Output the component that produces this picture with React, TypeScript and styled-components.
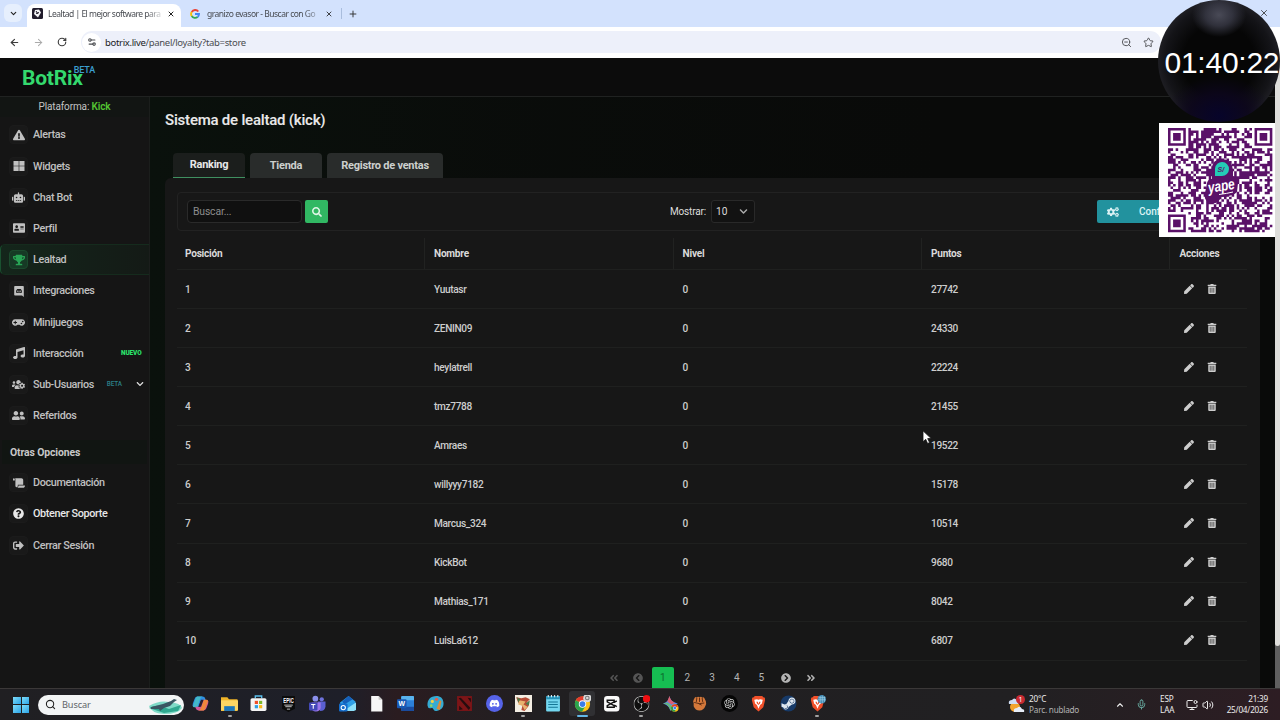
import React from 'react';
import styled, { createGlobalStyle, css } from 'styled-components';
import {
  FaExclamationTriangle, FaRobot, FaAddressCard, FaTrophy, FaGamepad, FaMusic, FaUsersCog,
  FaUserFriends, FaScroll, FaQuestionCircle, FaSignOutAlt, FaCogs, FaSearch, FaTrashAlt, FaPen,
  FaChevronCircleLeft, FaChevronCircleRight, FaAngleDoubleLeft, FaAngleDoubleRight, FaDiscord,
  FaChevronDown, FaSteamSymbol,
} from 'react-icons/fa';
import { SiOpenai, SiObsstudio } from 'react-icons/si';
import { ArrowLeft, ArrowRight, RotateCw, X, Plus, ChevronDown, ChevronUp, Star, ZoomOut, Search, Mic, Volume2, MonitorDot, Settings2 } from 'lucide-react';

const Global = createGlobalStyle`
  * { box-sizing: border-box; }
  body { margin: 0; background: #000; overflow: hidden; }
`;

const ui = '"Noto Sans", "Open Sans", sans-serif';

const Screen = styled.div`
  position: relative;
  width: 1280px;
  height: 720px;
  display: flex;
  flex-direction: column;
  overflow: hidden;
  font-family: Roboto, "Liberation Sans", sans-serif;
  color: #dcdcdc;
`;

/* ---------- browser ---------- */
const TabStrip = styled.div`
  height: 27px;
  flex: none;
  display: flex;
  align-items: stretch;
  background: #d3e2fd;
  padding-left: 4px;
  font: 8.5px ${ui};
  color: #474a50;
`;
const TabMenu = styled.div`
  width: 18px;
  height: 18px;
  margin: 4px 5px 0 0;
  border-radius: 6px;
  background: #e6effd;
  display: grid;
  place-items: center;
  color: #222;
`;
const BrowserTab = styled.div<{ $active?: boolean; $w: number }>`
  display: flex;
  align-items: center;
  width: ${p => p.$w}px;
  margin-top: ${p => (p.$active ? 4 : 0)}px;
  padding: ${p => (p.$active ? '0 6px 4px 5px' : '0 5px 0 9px')};
  border-radius: 8px 8px 0 0;
  background: ${p => (p.$active ? '#fff' : 'transparent')};
  svg { flex: none; color: #222; }
`;
const TabTitle = styled.span<{ $indent: number }>`
  flex: 1;
  margin: 0 4px 0 ${p => p.$indent}px;
  white-space: nowrap;
  overflow: hidden;
  letter-spacing: -0.5px;
  mask-image: linear-gradient(90deg, #000 85%, transparent 102%);
`;
const TabTail = styled.div`
  display: flex;
  align-items: center;
  gap: 6px;
  margin-left: 3px;
  color: #333;
  &::before { content: ''; width: 1px; height: 11px; background: #a9bddd; }
`;
const Toolbar = styled.div`
  height: 31px;
  flex: none;
  display: flex;
  align-items: center;
  background: #fff;
  padding: 0 0 1px 9px;
  color: #3c3c3c;
`;
const NavIcons = styled.div`
  display: flex;
  align-items: center;
  gap: 13px;
  width: 72px;
`;
const Omnibox = styled.div`
  display: flex;
  align-items: center;
  flex: none;
  width: 1080px;
  height: 22px;
  border-radius: 11px;
  background: #edf0fa;
  padding: 0 7px 0 1px;
  font: 9.5px ${ui};
  color: #4a4c50;
`;
const SiteInfo = styled.span`
  display: grid;
  place-items: center;
  width: 19px;
  height: 19px;
  border-radius: 50%;
  background: #fff;
  margin-right: 4px;
`;
const Url = styled.span`
  flex: 1;
  letter-spacing: -0.32px;
  b { font-weight: 400; color: #202124; }
`;
const OmniActions = styled.span`
  display: flex;
  gap: 11px;
`;

/* ---------- page ---------- */
const Page = styled.div`
  height: 630px;
  flex: none;
  display: flex;
  background: #0a0a0a;
`;
const Site = styled.div`
  width: 1275px;
  display: flex;
  flex-direction: column;
`;
const Scrollbar = styled.div`
  width: 5px;
  background: #5f5f5f;
  &::before { content: ''; display: block; height: 588px; background: #dededb; border-radius: 0 0 3px 3px; }
`;
const SiteHeader = styled.header`
  height: 39px;
  flex: none;
  border-bottom: 1px solid #202221;
  background: #0c0c0c;
  padding: 7px 0 0 22px;
  display: flex;
  align-items: flex-start;
`;
const Logo = styled.span`
  font-size: 21px;
  line-height: 26px;
  font-weight: 700;
  letter-spacing: -0.2px;
  color: #34d96e;
`;
const LogoBeta = styled.sup`
  margin: 0 0 0 -9px;
  font-size: 9px;
  line-height: 10px;
  font-weight: 500;
  letter-spacing: -0.2px;
  color: #3c9fd0;
`;
const Body = styled.div`
  flex: 1;
  display: flex;
  min-height: 0;
`;
const Sidebar = styled.nav`
  width: 150px;
  flex: none;
  background: #151515;
  border-right: 1px solid #1b1e1c;
`;
const Platform = styled.div`
  height: 20px;
  margin-bottom: 2.3px;
  background: #121513;
  text-align: center;
  font-size: 10px;
  line-height: 20px;
  letter-spacing: -0.13px;
  color: #c4c4c4;
  b { color: #53c332; font-weight: 600; }
`;
const NavItem = styled.a<{ $active?: boolean; $bright?: boolean }>`
  display: flex;
  align-items: center;
  height: 31.2px;
  padding: 0 5px 0 8px;
  font-size: 10.8px;
  font-weight: 500;
  letter-spacing: -0.33px;
  color: ${p => (p.$bright ? '#e8e8e8' : '#c0c0c0')};
  border-left: 1px solid transparent;
  ${p => p.$active && css`
    background: linear-gradient(90deg, #14261b, #141a16);
    border: 1px solid #152b1d;
    border-left-color: #1a5130;
    border-right: 0;
    border-radius: 5px 0 0 5px;
  `}
`;
const NavIcon = styled.span<{ $active?: boolean }>`
  width: 19px;
  height: 19px;
  margin-right: 5px;
  border-radius: 4px;
  display: grid;
  place-items: center;
  font-size: 12px;
  background: ${p => (p.$active ? '#163a25' : '#191919')};
  border: 1px solid ${p => (p.$active ? '#1b4a2d' : '#1b1b1b')};
  color: ${p => (p.$active ? '#28a455' : 'inherit')};
`;
const Badge = styled.span<{ $c: string; $mr: number; $bold?: boolean }>`
  margin-left: auto;
  margin-right: ${p => p.$mr}px;
  font-size: 6.4px;
  letter-spacing: -0.1px;
  font-weight: ${p => (p.$bold ? 900 : 500)};
  color: ${p => p.$c};
`;
const NavHeading = styled.div`
  height: 24px;
  margin: 9px 2px 3px;
  padding-left: 8px;
  background: #111512;
  font-size: 10.4px;
  font-weight: 700;
  letter-spacing: -0.1px;
  line-height: 25px;
  color: #c8c8c8;
`;
const Main = styled.main`
  flex: 1;
  display: flex;
  flex-direction: column;
  padding: 13px 15px 0;
  background:
    linear-gradient(90deg, #0a110c 0, rgba(10, 14, 11, 0.6) 30%, rgba(9, 9, 9, 0) 70%),
    #090a09;
`;
const Title = styled.h1`
  margin: 0;
  font-size: 15px;
  line-height: 21px;
  font-weight: 600;
  letter-spacing: -0.23px;
  color: #e6e6e6;
`;
const Tabs = styled.div`
  display: flex;
  gap: 5px;
  margin: 22px 0 0 8px;
`;
const Tab = styled.div<{ $active?: boolean; $w: number }>`
  width: ${p => p.$w}px;
  height: 25px;
  border-radius: 4px 4px 0 0;
  text-align: center;
  font-size: 11px;
  font-weight: 700;
  letter-spacing: -0.25px;
  line-height: ${p => (p.$active ? 23 : 25)}px;
  color: ${p => (p.$active ? '#e8e8e8' : '#cccfcd')};
  background: ${p => (p.$active ? '#1b1e1c' : '#292c2b')};
  border-bottom: ${p => (p.$active ? '1px solid #3f9060' : '0')};
`;
const Panel = styled.section`
  flex: 1;
  background: #171717;
  border-radius: 6px 6px 0 0;
  padding: 14px 13px 0 12px;
  display: flex;
  flex-direction: column;
`;
const Filters = styled.div`
  height: 39px;
  flex: none;
  border: 1px solid #222;
  border-radius: 4px;
  display: flex;
  align-items: center;
  justify-content: space-between;
  padding: 0 9px;
  font-size: 10px;
  letter-spacing: -0.15px;
`;
const Group = styled.div`
  display: flex;
  align-items: center;
`;
const SearchField = styled.div`
  width: 115px;
  height: 23px;
  border: 1px solid #2a2a2a;
  border-radius: 4px;
  background: #101010;
  padding-left: 5px;
  margin-right: 3px;
  font-size: 10.4px;
  line-height: 21px;
  color: #8d8d8d;
`;
const SearchButton = styled.button`
  width: 23px;
  height: 23px;
  border: 0;
  border-radius: 2px;
  padding: 0;
  background: #31b863;
  color: #dff5e6;
  font-size: 10px;
  display: grid;
  place-items: center;
`;
const Select = styled.div`
  width: 44px;
  height: 23px;
  margin-left: 5px;
  padding: 0 6px 0 4px;
  border: 1px solid #292929;
  border-radius: 3px;
  background: #121212;
  display: flex;
  align-items: center;
  justify-content: space-between;
  font-size: 10.2px;
`;
const Configure = styled.button`
  width: 140px;
  height: 23px;
  border: 0;
  border-radius: 2px;
  background: #22929e;
  color: #dcf2f4;
  font: 500 10px Roboto, sans-serif;
  display: flex;
  align-items: center;
  padding: 0 10px;
  svg { font-size: 12px; margin-right: 20px; }
`;
const Row = styled.div<{ $head?: boolean }>`
  display: grid;
  grid-template-columns: 247px 248.6px 248.4px 248.4px 77px;
  height: ${p => (p.$head ? 32 : 39.08)}px;
  flex: none;
  margin-top: ${p => (p.$head ? 7 : 0)}px;
  border-bottom: 1px solid #1f201f;
  font-size: 10.1px;
  font-weight: ${p => (p.$head ? 700 : 500)};
  letter-spacing: ${p => (p.$head ? -0.24 : -0.33)}px;
  color: ${p => (p.$head ? '#dadada' : '#cdcdcd')};
`;
const Cell = styled.div<{ $head?: boolean }>`
  display: flex;
  align-items: center;
  padding-left: 9px;
  border-left: 1px solid ${p => (p.$head ? '#212221' : 'transparent')};
  &:first-child { border-color: transparent; padding-left: 7px; }
`;
const Actions = styled.div`
  display: flex;
  align-items: center;
  gap: 13px;
  padding: 0 0 1px 14.5px;
  font-size: 10px;
`;
const Pager = styled.div`
  display: flex;
  align-items: flex-start;
  padding: 6px 0 0 425.5px;
  height: 28px;
  overflow: hidden;
  font-size: 10px;
  color: #b4b4b4;
`;
const PageButton = styled.span<{ $active?: boolean; $dim?: boolean }>`
  width: 22px;
  height: 22px;
  margin-right: 2.65px;
  border-radius: 2px 2px 0 0;
  display: grid;
  place-items: center;
  flex: none;
  background: ${p => (p.$active ? '#16be52' : 'transparent')};
  color: ${p => (p.$active ? '#0c6b2d' : p.$dim ? '#555' : 'inherit')};
`;

/* ---------- taskbar ---------- */
const Taskbar = styled.footer`
  height: 32px;
  flex: none;
  display: flex;
  align-items: center;
  background: linear-gradient(90deg, #201f22 0, #1e1f29 27%, #2a1c20 31%, #211f21 42%, #212022 80%, #2d1d23 100%);
  border-top: 1px solid #3b3838;
  padding-left: 13px;
  font: 9px ${ui};
  color: #ececec;
`;
const StartGrid = styled.div`
  width: 16px;
  height: 16px;
  display: grid;
  grid-template-columns: 1fr 1fr;
  gap: 1px;
  i { background: linear-gradient(135deg, #7fdcf8, #2ba4e8); }
`;
const SearchPill = styled.div`
  width: 146px;
  height: 20px;
  margin: 0 1.5px 0 9px;
  padding-left: 7px;
  border-radius: 10px;
  background: #f2f4f5;
  color: #606468;
  display: flex;
  align-items: center;
  gap: 6px;
  overflow: hidden;
  font-size: 9.2px;
  letter-spacing: -0.1px;
  svg:last-child { margin-left: auto; }
`;
const AppSlot = styled.div<{ $run?: 'idle' | 'active' }>`
  width: 29.4px;
  height: 31px;
  display: flex;
  flex-direction: column;
  align-items: center;
  padding-top: 6px;
  &::after {
    content: '';
    margin-top: 3px;
    width: ${p => (p.$run === 'active' ? 11 : 4)}px;
    height: 2px;
    border-radius: 1px;
    background: ${p => (p.$run === 'active' ? '#63b8e8' : p.$run ? '#a2a2a2' : 'transparent')};
  }
`;
const Highlight = styled.div`
  width: 26px;
  margin: -4px 0 -4px;
  padding: 4px 0 4px 5px;
  height: 25px;
  border-radius: 3px;
  background: #303033;
`;
const Weather = styled.div`
  display: flex;
  align-items: center;
  gap: 4px;
  margin-left: 176px;
  width: 107px;
`;
const TwoLine = styled.div<{ $right?: boolean; $w?: number }>`
  display: flex;
  flex-direction: column;
  width: ${p => (p.$w ? p.$w + 'px' : 'auto')};
  margin-left: ${p => (p.$right ? 'auto' : '0')};
  text-align: ${p => (p.$right ? 'right' : 'left')};
  font-size: 8.2px;
  line-height: 10.5px;
  letter-spacing: -0.22px;
  white-space: nowrap;
`;
const Dim = styled.span`color: #b3b3b3;`;
const Tray = styled.div`
  display: flex;
  align-items: center;
  flex: 1;
  padding-right: 12px;
`;
const TrayItem = styled.div<{ $w: number }>`
  width: ${p => p.$w}px;
  flex: none;
  display: flex;
  svg { flex: none; }
`;

/* ---------- stream overlays ---------- */
const Ball = styled.div`
  position: absolute;
  left: 1157.5px;
  top: 0;
  width: 122px;
  height: 122px;
  border-radius: 50%;
  background:
    radial-gradient(ellipse 27px 22px at 61px 15px, rgba(76, 77, 90, 0.95) 0, rgba(58, 59, 72, 0.8) 50%, rgba(20, 20, 26, 0) 100%),
    radial-gradient(ellipse 54px 40px at 61px 116px, #07042a 0, rgba(12, 6, 28, 0.9) 55%, transparent 100%),
    radial-gradient(circle at 61px 61px, #060606 0 36px, #141418 54px, #1e1e23 61px);
`;
const Timer = styled.div`
  position: absolute;
  left: 1164.5px;
  top: 46px;
  font: 30px/34px "Liberation Sans", Arial, sans-serif;
  letter-spacing: -0.25px;
  color: #fff;
  white-space: nowrap;
`;
const QrCard = styled.div`
  position: absolute;
  left: 1159px;
  top: 123px;
  width: 121px;
  height: 114px;
  padding: 5px 0 0 9px;
  background: linear-gradient(90deg, #fff 116px, #dededb 116px);
`;
const Pointer = styled.svg`
  position: absolute;
  left: 922px;
  top: 430px;
`;
const WindowClose = styled.div`
  position: absolute;
  left: 1259px;
  top: 8px;
  display: flex;
  color: #333;
`;

const QR_SIZE = 41;
function qrPath() {
  let seed = 90217;
  const rand = () => ((seed = (seed * 1103515245 + 12345) & 0x7fffffff) >> 12) / (0x7fffffff >> 12);
  const finder = (x: number, y: number) => {
    const ring = Math.max(Math.abs(x - 3), Math.abs(y - 3));
    return ring === 3 || ring <= 1;
  };
  let d = '';
  for (let y = 0; y < QR_SIZE; y++) {
    for (let x = 0; x < QR_SIZE; x++) {
      let on = rand() < 0.52;
      const fx = x > QR_SIZE / 2 ? QR_SIZE - 1 - x : x;
      const fy = y > QR_SIZE / 2 ? QR_SIZE - 1 - y : y;
      const corner = !(x > 20 && y > 20);
      if (corner && fx < 8 && fy < 8) on = fx < 7 && fy < 7 && finder(fx, fy);
      if (on) d += `M${x} ${y}h1v1h-1z`;
    }
  }
  return d;
}
const QR_PATH = qrPath();

function Qr() {
  return (
    <svg width="105" height="105" viewBox="0 0 105 105">
      <path d={QR_PATH} transform="scale(2.545)" fill="#5a1168" />
      <path d="M39 55q1-4 5-4V41q0-10 10-10t11 11v6q6 0 5 7l-1 9q-3 4-16 5-3 8-11 6-7-3-5-10z" fill="#5a1168" />
      <path d="M47 48V40.500a7 7 0 1 1 7 7.500z" fill="#24cbb6" />
      <text x="49.500" y="43.500" fontFamily="Liberation Sans" fontStyle="italic" fontWeight="700" fontSize="7" fill="#5a1168">S/</text>
      <text x="40" y="63" transform="rotate(-9 53 60)" fontFamily="Liberation Sans" fontStyle="italic" fontWeight="700" fontSize="15" textLength="27" lengthAdjust="spacingAndGlyphs" fill="#fff">yape</text>
      <path d="M51 66.500q8-1 14-2.500" stroke="#fff" strokeWidth="1" fill="none" />
    </svg>
  );
}

const WidgetsIcon = () => (
  <svg width="12" height="12" viewBox="0 0 12 12" fill="currentColor">
    <path d="M.5 1h5.200v4.700H.5zM6.300 1h5.200v4.700H6.300zM.5 6.300h5.200V11H.5zM6.300 6.300h5.200V11H6.300z" />
  </svg>
);
const IntegrationsIcon = () => (
  <svg width="12" height="12" viewBox="0 0 12 12">
    <path d="M2 1h8a.8.8 0 0 1 .8.8V12L9 10.500H2a.8.8 0 0 1-.8-.8V1.800A.8.8 0 0 1 2 1z" fill="currentColor" />
    <path d="M3 7.500Q3 4.500 4.300 4h3.400Q9 4.500 9 7.500q-1 .8-1.600.2H4.600Q4 8.300 3 7.500z" fill="#1a1a1a" />
    <circle cx="4.900" cy="6.200" r=".7" fill="currentColor" /><circle cx="7.100" cy="6.200" r=".7" fill="currentColor" />
  </svg>
);

const nav = [
  { icon: <FaExclamationTriangle />, label: 'Alertas' },
  { icon: <WidgetsIcon />, label: 'Widgets' },
  { icon: <FaRobot size={13} />, label: 'Chat Bot' },
  { icon: <FaAddressCard />, label: 'Perfil' },
  { icon: <FaTrophy />, label: 'Lealtad', active: true },
  { icon: <IntegrationsIcon />, label: 'Integraciones' },
  { icon: <FaGamepad size={13} />, label: 'Minijuegos' },
  { icon: <FaMusic />, label: 'Interacción', extra: <Badge $c="#2be36b" $mr={2.5} $bold>NUEVO</Badge> },
  { icon: <FaUsersCog size={13} />, label: 'Sub-Usuarios', extra: <><Badge $c="#2c8088" $mr={14}>BETA</Badge><FaChevronDown size={8} color="#ddd" /></> },
  { icon: <FaUserFriends size={13} />, label: 'Referidos' },
];
const otherNav = [
  { icon: <FaScroll />, label: 'Documentación' },
  { icon: <FaQuestionCircle size={11} />, label: 'Obtener Soporte', bright: true },
  { icon: <FaSignOutAlt size={11} />, label: 'Cerrar Sesión' },
];
const ranking: [string, string][] = [
  ['Yuutasr', '27742'], ['ZENIN09', '24330'], ['heylatrell', '22224'], ['tmz7788', '21455'], ['Amraes', '19522'],
  ['willyyy7182', '15178'], ['Marcus_324', '10514'], ['KickBot', '9680'], ['Mathias_171', '8042'], ['LuisLa612', '6807'],
];

/* Taskbar artwork shares a 16-unit box. */
const Art = ({ children }: { children: React.ReactNode }) => (
  <svg width="17" height="17" viewBox="0 0 16 16">{children}</svg>
);
const Chrome = () => (
  <>
    <circle cx="8" cy="8.500" r="7.200" fill="#fbc116" />
    <path d="M8 8.500 1.700 5A7.200 7.200 0 0 1 14.400 5z" fill="#e33b2e" />
    <path d="M8 8.500 1.700 5A7.200 7.200 0 0 0 7.500 15.700l3.200-5.200z" fill="#2ba24c" />
    <circle cx="8" cy="8.500" r="3.500" fill="#fff" /><circle cx="8" cy="8.500" r="2.700" fill="#3a7de8" />
  </>
);
const BraveShape = () => (
  <>
    <path d="M4.500 1h7l1 1.200 1.500.3.200 2.500-1.700 6.500L8 15.500 3.500 11.500 1.800 5 2 2.500l1.500-.3z" fill="#f0502a" />
    <path d="M4 4.500 6.500 4 8 4.500 9.500 4l2.500.5-.8 3.500-1.700 1.500L8 13 6.500 9.500 4.800 8z" fill="#fff" />
    <path d="M6 6.300h1.300L8 8.500l.7-2.200H10L9.400 8 8 9.500 6.600 8z" fill="#f0502a" />
  </>
);

const apps: { art: React.ReactNode; run?: 'idle' | 'active' }[] = [
  { art: <><path d="M5 1.500h5q2 0 2.500 2L13 5H8.500L6 11.500 1.500 11Q0 10.500.8 8L2.500 3.500Q3.200 1.500 5 1.500z" fill="#2d8fe4" /><path d="M5 1.500q-1.500.5-2 3L1 10q-.3 1.500 1 1.500h3L7.500 4Q8 2 10 1.500z" fill="#43b8c8" /><path d="M11 14.500H6q-2 0-2.500-2L3 11h4.500L10 4.500l4.500.5q1.500.5.7 3L13.500 12.500q-.7 2-2.500 2z" fill="#d4569a" /><path d="M11 14.500q1.500-.5 2-3L15 6q.3-1.500-1-1.500h-3L8.500 12Q8 14 6 14.500z" fill="#f0873c" /><path d="m6 11 2.500-6.500H11L8.500 11z" fill="#2a2030" /></> },
  { art: <><path d="M0 2h6l1.500 2H15.500v11H0z" fill="#f0b429" /><path d="M0 5h16v9.500H0z" fill="#fdd663" /><path d="M3 15v-4.500h10V15z" fill="#1c77bb" /></>, run: 'idle' },
  { art: <><path d="M5 3V1h6v2" fill="none" stroke="#5bc0ee" strokeWidth="1.300" /><rect x=".5" y="3" width="15" height="12" rx="1.500" fill="#f4f4f4" /><path d="M4.500 5.500h3v3h-3z" fill="#f04f28" /><path d="M8.500 5.500h3v3h-3z" fill="#7db92c" /><path d="M4.500 9.500h3v3h-3z" fill="#2c9fe5" /><path d="M8.500 9.500h3v3h-3z" fill="#fbb91a" /></> },
  { art: <><path d="M2 1h12v12l-6 3-6-3z" fill="#0b0b0b" /><text x="8" y="7.800" textAnchor="middle" fontFamily="Liberation Sans" fontWeight="700" fontSize="7" textLength="10" lengthAdjust="spacingAndGlyphs" fill="#fff">EPIC</text><path d="M4 9.500h8M5 11h6M6.500 13.300h3" stroke="#ddd" strokeWidth=".8" /></> },
  { art: <><circle cx="6" cy="3.500" r="2.700" fill="#8a90ec" /><circle cx="12" cy="4" r="2" fill="#6e72dc" /><path d="M8 6h7.500v5q-.5 4-5 4z" fill="#5a5fd0" /><path d="M2.500 7H11v5q-.5 3.500-4.500 3.500-4 0-4-3.500z" fill="#9b76ea" /><rect y="7" width="8" height="7.500" rx="1" fill="#4349b8" /><path d="M2 9h4M4 9v4" stroke="#fff" strokeWidth="1" /></> },
  { art: <><path d="m1 7 8-6 6.500 5v8H2z" fill="#2f9fe6" /><path d="m3 6 6-5 4 3-8 5z" fill="#155fb9" /><path d="M4 15h10l2-1V7z" fill="#8ce0fa" /><rect y="8" width="8" height="7.500" rx="1" fill="#136ccb" /><circle cx="4" cy="11.800" r="2" fill="none" stroke="#fff" /></> },
  { art: <><path d="M3 1h7l3.500 3.500V15.500H3z" fill="#f7f7f7" /><path d="M10 1v3.500h3.500z" fill="#c8c8c8" /></> },
  { art: <><rect x="4" y="1" width="12" height="14" rx="1" fill="#2c7fd8" /><path d="M4 2q0-1 1-1h10q1 0 1 1v3H4z" fill="#59b4ef" /><path d="M4 11h12v3q0 1-1 1H5q-1 0-1-1z" fill="#1a4b9e" /><rect y="4" width="9" height="8.500" rx="1" fill="#1858b4" /><text x="4.500" y="10.600" textAnchor="middle" fontFamily="Liberation Sans" fontWeight="700" fontSize="6.500" fill="#fff">W</text></> },
  { art: <><path d="M9 1C3 1 0 5 .5 10q.5 3 3 2.500 2-.6 2.500 1 .7 2 3 1.500C14 14 16 11 15.500 7 15 3 12.500 1 9 1z" fill="#35abd3" /><circle cx="5" cy="6" r="1.500" fill="#f3cf45" /><circle cx="9" cy="4" r="1.500" fill="#e65e49" /><circle cx="4" cy="10" r="1.200" fill="#8fd660" /><path d="m9 13 2.500-7q1-1.800 2 0L12 14z" fill="#d88b3d" /></> },
  { art: <><path d="M1 1h14v14H1z" fill="#7c1517" /><path d="m2.500 3 2-.5 9 9.500-1.500 2zM3 10l3.500 3.500L3 14zM11 2.500l3 .5v4z" fill="#260d0f" /></> },
  { art: <><circle cx="8" cy="8" r="8" fill="#5663e8" /><g transform="translate(3 3)"><FaDiscord size={10} color="#fff" /></g></> },
  { art: <><path d="M0 0h16v16H0z" fill="#f4eee3" /><path d="m1 2 5 1 4-1 4 2-3 3 2 3-4 5-3-1 1-4-4-3z" fill="#b64b35" /><path d="m4 5 6 1-2 3 4 2-3 3-2-4-4-1z" fill="#e7b36f" /><path d="m2 2 3 2-2 3zM10 8l4-3-1 5z" fill="#4c7b49" /></>, run: 'idle' },
  { art: <><rect x="2" y="1" width="13" height="14.500" rx="1" fill="#73d7ef" /><path d="M2 1h13v3H2z" fill="#2792b7" /><path d="M4 6.500h9M4 9h9M4 11.500h9" stroke="#147795" strokeWidth="1" /><path d="M4 0v2M7 0v2M10 0v2M13 0v2" stroke="#e3eff3" /></> },
  { art: <><Chrome /><circle cx="12.500" cy="3" r="3.800" fill="#d9d9d9" /><circle cx="12.500" cy="2.800" r="1.700" fill="none" stroke="#777" /></>, run: 'active' },
  { art: <><rect x="1" y="1" width="14.500" height="14.500" rx="3" fill="#fafafa" /><path d="M4 5h6.500v1.500L4 10v1.500h6.500V10L4 6.500zM10.500 7 13 5.500M10.500 9.500 13 11" fill="none" stroke="#111" strokeWidth="1.400" /></> },
  { art: <><circle cx="8" cy="8.500" r="7.700" fill="#0e0e0e" /><g transform="translate(.5 1)"><SiObsstudio size={15} color="#c6c6c6" /></g><circle cx="12.800" cy="3.500" r="3.500" fill="#f00f12" /></>, run: 'idle' },
  { art: <><path d="M7 1q1 5 5 6l3 1q-5 1-7 7-1-5-7-7 5-1 6-7z" fill="#5e8bea" /><path d="M7 1q1 5 5 6l-3 2-4-3z" fill="#dc6070" /><path d="M1 8q5 0 7 7l1-5-4-3z" fill="#64b878" /><g transform="translate(8 8) scale(.5)"><Chrome /></g></> },
  { art: <><path d="M2.500 7.500q-1-1 0-3l1-2q1-1.200 2 0 1-1.700 2.500-.3 1.500-1.400 2.500.3 1.200-1 2 .3l1.500 3q.7 2-.5 4.500-1.500 4.200-5.500 4.200-4 0-5.500-4z" fill="#d4783a" /><path d="M5.500 2.800 5 6.500M8 2.500V6.500M10.500 2.800l.5 3.700M3 7q5 2 9.500.5M7 8l3 1.500" stroke="#5a2a12" strokeWidth=".9" fill="none" /></> },
  { art: <><circle cx="8" cy="8" r="8" fill="#050505" /><g transform="translate(3 3)"><SiOpenai size={10} color="#d8d8d8" /></g></> },
  { art: <BraveShape /> },
  { art: <><circle cx="8" cy="8" r="7.500" fill="#173a68" /><g transform="translate(.5 .5)"><FaSteamSymbol size={15} color="#dfe8f0" /></g></> },
  { art: <><BraveShape /><circle cx="12" cy="4" r="4" fill="#3f89b4" /><path d="M9 2.500h6.500M8.500 4.500h7M10.500 1v6.500M12.500.5v7M14.500 1.500v5" stroke="#a5d1e4" strokeWidth=".6" /></>, run: 'idle' },
];

export default function App() {
  return (
    <Screen>
      <Global />
      <TabStrip>
        <TabMenu><ChevronDown size={9} strokeWidth={3} /></TabMenu>
        <BrowserTab $active $w={154}>
          <svg width="11" height="11" viewBox="0 0 11 11">
            <rect width="11" height="11" rx="1.500" fill="#211c2c" />
            <path d="m3 2 4-.5L9 4.500 6 9.500 2 6z" fill="#f4f4f6" /><path d="m4 3 2 3M7 4.500l-3 1" stroke="#211c2c" />
          </svg>
          <TabTitle $indent={5}>Lealtad | El mejor software para</TabTitle>
          <X size={8} strokeWidth={3} />
        </BrowserTab>
        <BrowserTab $w={157}>
          <svg width="10" height="10" viewBox="0 0 10 10" fill="none" strokeWidth="1.900">
            <path d="M8.300 2.500A4 4 0 0 0 1.700 2.900" stroke="#ea4335" /><path d="M1.700 2.900a4 4 0 0 0 0 4.200" stroke="#fbbc05" />
            <path d="M1.700 7.100A4 4 0 0 0 7.600 8" stroke="#34a853" /><path d="M5 5h4A4 4 0 0 1 7.600 8" stroke="#4285f4" />
          </svg>
          <TabTitle $indent={7}>granizo evasor - Buscar con Go</TabTitle>
          <X size={8} strokeWidth={2.500} />
        </BrowserTab>
        <TabTail><Plus size={10} strokeWidth={2.300} /></TabTail>
      </TabStrip>
      <Toolbar>
        <NavIcons>
          <ArrowLeft size={11} strokeWidth={2.500} />
          <ArrowRight size={11} color="#aaa" strokeWidth={2.200} />
          <RotateCw size={10} strokeWidth={2.700} />
        </NavIcons>
        <Omnibox>
          <SiteInfo><Settings2 size={10} strokeWidth={2.600} /></SiteInfo>
          <Url><b>botrix.live</b>/panel/loyalty?tab=store</Url>
          <OmniActions><ZoomOut size={11} /><Star size={11} /></OmniActions>
        </Omnibox>
      </Toolbar>

      <Page>
        <Site>
          <SiteHeader><Logo>BotRix</Logo><LogoBeta>BETA</LogoBeta></SiteHeader>
          <Body>
            <Sidebar>
              <Platform>Plataforma: <b>Kick</b></Platform>
              {nav.map(n => (
                <NavItem key={n.label} $active={n.active}>
                  <NavIcon $active={n.active}>{n.icon}</NavIcon>{n.label}{n.extra}
                </NavItem>
              ))}
              <NavHeading>Otras Opciones</NavHeading>
              {otherNav.map(n => (
                <NavItem key={n.label} $bright={n.bright}><NavIcon>{n.icon}</NavIcon>{n.label}</NavItem>
              ))}
            </Sidebar>
            <Main>
              <Title>Sistema de lealtad (kick)</Title>
              <Tabs>
                <Tab $active $w={72}>Ranking</Tab>
                <Tab $w={72}>Tienda</Tab>
                <Tab $w={116}>Registro de ventas</Tab>
              </Tabs>
              <Panel>
                <Filters>
                  <Group>
                    <SearchField>Buscar...</SearchField>
                    <SearchButton><FaSearch /></SearchButton>
                  </Group>
                  <Group>Mostrar:<Select>10<FaChevronDown size={9} color="#aaa" /></Select></Group>
                  <Configure><FaCogs />Configuración</Configure>
                </Filters>
                <Row $head>
                  {['Posición', 'Nombre', 'Nivel', 'Puntos', 'Acciones'].map(h => <Cell $head key={h}>{h}</Cell>)}
                </Row>
                {ranking.map(([name, points], i) => (
                  <Row key={name}>
                    <Cell>{i + 1}</Cell><Cell>{name}</Cell><Cell>0</Cell><Cell>{points}</Cell>
                    <Actions><FaPen /><FaTrashAlt /></Actions>
                  </Row>
                ))}
                <Pager>
                  <PageButton $dim><FaAngleDoubleLeft /></PageButton>
                  <PageButton $dim><FaChevronCircleLeft /></PageButton>
                  <PageButton $active>1</PageButton>
                  {[2, 3, 4, 5].map(n => <PageButton key={n}>{n}</PageButton>)}
                  <PageButton><FaChevronCircleRight /></PageButton>
                  <PageButton><FaAngleDoubleRight /></PageButton>
                </Pager>
              </Panel>
            </Main>
          </Body>
        </Site>
        <Scrollbar />
      </Page>

      <Taskbar>
        <StartGrid><i /><i /><i /><i /></StartGrid>
        <SearchPill>
          <Search size={11} color="#222" strokeWidth={2.300} />Buscar
          <svg width="37" height="20" viewBox="0 0 37 20">
            <path d="M2 11q10-6 20-4 12 1 13 6-4 6-18 6Q4 18 2 11z" fill="#7fdac7" />
            <path d="M2 13q8-4 14-1l6 2 12-4-3 6-14 2z" fill="#2fa890" />
            <path d="m4 12 12-3 8-3 3-2 3 1-3 2-4 4-6 2-4 3-1-2-8 0z" fill="#3a5662" />
          </svg>
        </SearchPill>
        {apps.map((a, i) => (
          <AppSlot key={i} $run={a.run}>
            {a.run === 'active' ? <Highlight><Art>{a.art}</Art></Highlight> : <Art>{a.art}</Art>}
          </AppSlot>
        ))}
        <Weather>
          <svg width="17" height="19" viewBox="0 0 17 19">
            <circle cx="7" cy="12" r="5" fill="#f3a32e" />
            <path d="M1 9q-1-4 3-4 2-3 5 0 3 1 1 4z" fill="#cfdcf2" /><path d="M6 17q-1-4 3-4 3-3 5 1 3 0 2 3z" fill="#e6edf8" />
            <circle cx="12.500" cy="4.500" r="4.500" fill="#c82a31" />
            <text x="12.500" y="7" textAnchor="middle" fontSize="7" fontFamily="Noto Sans" fill="#fff">1</text>
          </svg>
          <TwoLine><span>20°C</span><Dim>Parc. nublado</Dim></TwoLine>
        </Weather>
        <Tray>
          <TrayItem $w={21}><ChevronUp size={10} strokeWidth={2.600} /></TrayItem>
          <TrayItem $w={24}><Mic size={11} color="#6db5aa" /></TrayItem>
          <TwoLine $w={26}><span>ESP</span><span>LAA</span></TwoLine>
          <TrayItem $w={16}><MonitorDot size={12} /></TrayItem>
          <TrayItem $w={12}><Volume2 size={12} /></TrayItem>
          <TwoLine $right><span>21:39</span><span>25/04/2026</span></TwoLine>
        </Tray>
      </Taskbar>

      <Pointer width="11" height="15" viewBox="0 0 11 15">
        <path d="M1 .8v11l2.700-2.500 1.900 4.200 2-.9-1.900-4h3.600z" fill="#fff" stroke="#111" strokeWidth=".8" />
      </Pointer>
      <WindowClose><X size={10} strokeWidth={2} /></WindowClose>
      <Ball />
      <Timer>01:40:22</Timer>
      <QrCard><Qr /></QrCard>
    </Screen>
  );
}
